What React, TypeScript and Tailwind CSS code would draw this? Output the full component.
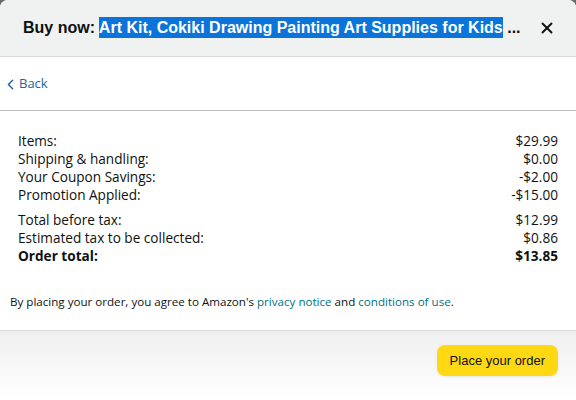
import { X, ChevronLeft } from "lucide-react";

const lines = [
  { label: "Items:", value: "$29.99" },
  { label: "Shipping & handling:", value: "$0.00" },
  { label: "Your Coupon Savings:", value: "-$2.00" },
  { label: "Promotion Applied:", value: "-$15.00" },
];

const totals = [
  { label: "Total before tax:", value: "$12.99" },
  { label: "Estimated tax to be collected:", value: "$0.86" },
];

export default function App() {
  return (
    <div className="h-[400px] w-[576px] overflow-hidden bg-[#6b6b6b] font-['Liberation_Sans',Arial,sans-serif] text-[#0f1111]">
      <div className="flex h-full flex-col overflow-hidden rounded-t-[8px] bg-white">
        {/* Header */}
        <div className="flex h-[57px] shrink-0 items-center justify-between border-b border-[#d5d9d9] bg-[#f0f2f2] pl-[23px] pr-[20px]">
          <h1 className="whitespace-nowrap text-[16px] font-bold">
            Buy now:{" "}
            <span className="bg-[#0a74da] py-[2px] text-white">
              Art Kit, Cokiki Drawing Painting Art Supplies for Kids
            </span>{" "}
            ...
          </h1>
          <X className="h-[18px] w-[18px]" strokeWidth={2.5} />
        </div>

        {/* Back */}
        <div className="flex h-[54px] shrink-0 items-center border-b border-[#bbbfbf] pl-[2px] pt-[1px]">
          <a className="flex items-center text-[13px] font-['Open_Sans',sans-serif] text-[#2162a1]">
            <ChevronLeft className="h-[17px] w-[17px]" strokeWidth={2} />
            Back
          </a>
        </div>

        {/* Summary */}
        <div className="px-[18px] pt-[21px] font-['Open_Sans',sans-serif] text-[13.6px] leading-[18px]">
          {lines.map((l) => (
            <div key={l.label} className="flex justify-between">
              <span>{l.label}</span>
              <span>{l.value}</span>
            </div>
          ))}
          <div className="mt-[7px]">
            {totals.map((l) => (
              <div key={l.label} className="flex justify-between">
                <span>{l.label}</span>
                <span>{l.value}</span>
              </div>
            ))}
            <div className="flex justify-between font-bold">
              <span>Order total:</span>
              <span>$13.85</span>
            </div>
          </div>
        </div>

        <p className="px-[10px] pt-[28px] font-['Open_Sans',sans-serif] text-[11.6px]">
          By placing your order, you agree to Amazon's{" "}
          <a className="text-[#007185]">privacy notice</a> and{" "}
          <a className="text-[#007185]">conditions of use</a>.
        </p>

        {/* Footer */}
        <div className="mt-[20px] flex flex-1 justify-end border-t border-[#d5d9d9] bg-gradient-to-b from-[#efefef] to-white pr-[18px] pt-[14px]">
          <button className="h-[31px] rounded-[8px] bg-[#ffd814] px-[13px] text-[13px] text-[#0f1111] shadow-[0_1px_2px_rgba(213,217,217,0.5)]">
            Place your order
          </button>
        </div>
      </div>
    </div>
  );
}
